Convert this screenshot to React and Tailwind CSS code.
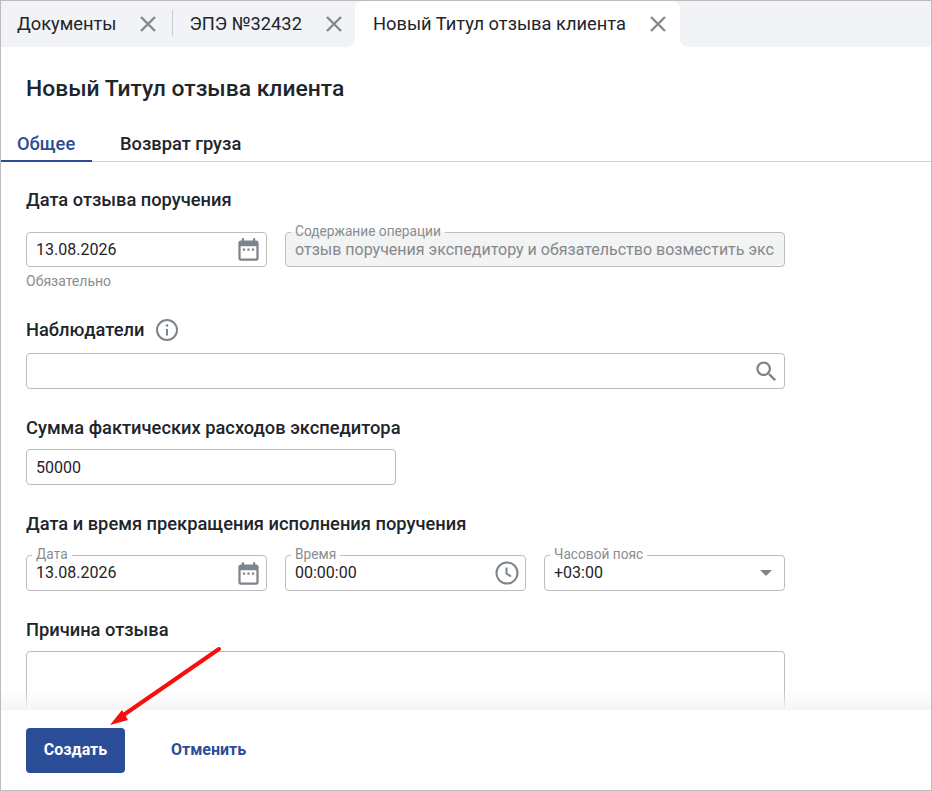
const CloseIcon = () => (
    <svg width="20" height="20" viewBox="0 0 20 20" fill="none" stroke="#85878a" strokeWidth="2.4">
        <path d="M3 3l14 14M17 3L3 17" />
    </svg>
);

const CalendarIcon = () => (
    <svg width="27" height="27" viewBox="0 0 24 24" fill="#7c848c">
        <path d="M9 11H7v2h2v-2zm4 0h-2v2h2v-2zm4 0h-2v2h2v-2zm2-7h-1V2h-2v2H8V2H6v2H5c-1.11 0-1.99.9-1.99 2L3 20c0 1.1.89 2 2 2h14c1.1 0 2-.9 2-2V6c0-1.1-.9-2-2-2zm0 16H5V9h14v11z" />
    </svg>
);

const SearchIcon = () => (
    <svg width="27" height="27" viewBox="0 0 24 24" fill="#7c848c">
        <path d="M15.5 14h-.79l-.28-.27C15.41 12.59 16 11.11 16 9.5 16 5.91 13.09 3 9.5 3S3 5.91 3 9.5 5.91 16 9.5 16c1.61 0 3.09-.59 4.23-1.57l.27.28v.79l5 4.99L20.49 19l-4.99-5zm-6 0C7.01 14 5 11.99 5 9.5S7.01 5 9.5 5 14 7.01 14 9.5 11.99 14 9.5 14z" />
    </svg>
);

const ClockIcon = () => (
    <svg className="mr-[2px]" width="24" height="24" viewBox="0 0 24 24" fill="none" stroke="#7c848c" strokeWidth="2">
        <circle cx="12" cy="12" r="10.5" />
        <path d="M11.5 6.5v6l4.5 3" />
    </svg>
);

const InfoIcon = () => (
    <svg width="24" height="24" viewBox="0 0 24 24" fill="none" stroke="#7c848c" strokeWidth="2">
        <circle cx="12" cy="12" r="10" />
        <path d="M12 11v6.5" />
        <circle cx="12" cy="7.5" r="1.3" fill="#7c848c" stroke="none" />
    </svg>
);

const Field = ({ label, value, icon, disabled, className }) => (
    <div className={`relative ${className || "h-9"}`}>
        {label && (
            <span
                className={`absolute left-[6px] top-[-8px] px-1 text-[13.71px] leading-[15px] text-[#8a8d91] ${
                    disabled ? "bg-[linear-gradient(to_bottom,#ffffff_53%,#f2f3f3_53%)]" : "bg-white"
                }`}
            >
                {label}
            </span>
        )}
        <input
            readOnly
            value={value || ""}
            className={`w-full h-full rounded border border-[#bdbdbd] pl-[9px] pr-9 text-base outline-none ${
                label && !disabled ? "pb-[2px]" : ""
            } ${disabled ? "bg-[#f2f3f3] text-[#85888c] pr-[9px]" : "bg-white text-[#1f2328]"}`}
        />
        {icon && (
            <span className="absolute right-[5px] top-0 h-full flex items-center">{icon}</span>
        )}
    </div>
);

const Label = ({ children, className }) => (
    <h3 className={`text-[18.29px] leading-5 font-medium text-[#20252b] ${className || ""}`}>{children}</h3>
);

const App = () => {
    return (
        <div className="relative w-[932px] h-[791px] flex flex-col overflow-hidden border border-[#bcbcbc] bg-white font-['Roboto',sans-serif] text-[#20252b]">

            {/* ВКЛАДКИ ДОКУМЕНТОВ */}
            <div className="flex h-[46px] shrink-0 bg-white text-[18.29px]">
                <div className="flex items-center w-[354px] bg-[#f1f3f7] rounded-br-lg">
                    <span className="ml-4">Документы</span>
                    <span className="ml-[21px]"><CloseIcon /></span>
                    <span className="ml-[14px] w-px h-[26px] bg-[#c9ccd0] mb-[2px]"></span>
                    <span className="ml-[17px]">ЭПЭ №32432</span>
                    <span className="ml-[22px]"><CloseIcon /></span>
                </div>
                <div className="bg-[linear-gradient(to_bottom,#f1f3f7_50%,#ffffff_50%)]">
                    <div className="flex items-center h-full w-[325px] pl-[18px] rounded-t-lg bg-white">
                        <span>Новый Титул отзыва клиента</span>
                        <span className="ml-[22px]"><CloseIcon /></span>
                    </div>
                </div>
                <div className="flex-1 bg-[#f1f3f7] rounded-bl-lg"></div>
            </div>

            {/* ЗАГОЛОВОК */}
            <h1 className="ml-[25px] mt-[27px] text-[22.86px] leading-[30px] font-medium">Новый Титул отзыва клиента</h1>

            {/* ТАБЫ */}
            <div className="flex mt-[22px] h-[36px] border-b border-[#cfcfcf] shrink-0 text-[18.29px] font-medium">
                <div className="w-[91px] h-[36px] pl-4 pt-[4px] border-b-2 border-[#2b4c96] text-[#2b4c96]">
                    Общее
                </div>
                <div className="ml-7 pt-[4px]">Возврат груза</div>
            </div>

            {/* ФОРМА */}
            <div className="flex-1 overflow-hidden pl-[25px] pt-[28px] w-[784px]">
                <Label>Дата отзыва поручения</Label>
                <div className="grid grid-cols-[241px_1fr] gap-[18px] mt-[22px]">
                    <Field className="h-[35px]" value="13.08.2026" icon={<CalendarIcon />} />
                    <Field
                        className="h-[35px]"
                        disabled
                        label="Содержание операции"
                        value="отзыв поручения экспедитору и обязательство возместить экспедитору расходы"
                    />
                </div>
                <p className="mt-[5px] text-[14px] leading-[18px] text-[#8a8d91]">Обязательно</p>

                <div className="flex items-center gap-[11px] mt-[28px]">
                    <Label>Наблюдатели</Label>
                    <InfoIcon />
                </div>
                <Field className="h-9 mt-[11px]" icon={<SearchIcon />} />

                <Label className="mt-[29px]">Сумма фактических расходов экспедитора</Label>
                <Field className="h-9 mt-[11px] w-[370px]" value="50000" />

                <Label className="mt-[29px]">Дата и время прекращения исполнения поручения</Label>
                <div className="grid grid-cols-3 gap-[18px] mt-[21px]">
                    <Field label="Дата" value="13.08.2026" icon={<CalendarIcon />} />
                    <Field label="Время" value="00:00:00" icon={<ClockIcon />} />
                    <Field
                        label="Часовой пояс"
                        value="+03:00"
                        icon={
                            <svg width="26" height="8" viewBox="0 0 26 8" fill="#7c848c">
                                <path d="M6 1h12l-6 6z" />
                            </svg>
                        }
                    />
                </div>

                <Label className="mt-[29px]">Причина отзыва</Label>
                <div className="mt-[11px] h-[120px] rounded border border-[#bdbdbd]"></div>
            </div>

            {/* ПОДВАЛ */}
            <div className="absolute left-0 right-0 top-[689px] h-[20px] bg-gradient-to-b from-transparent to-[#f4f5f5]"></div>
            <div className="absolute left-0 right-0 bottom-0 h-[80px] bg-white flex items-start pl-[25px] pt-[18px]">
                <button className="w-[99px] h-[45px] pb-[2px] rounded bg-[#2b4c96] text-white text-[16px] font-bold">Создать</button>
                <button className="ml-[46px] h-[45px] pb-[2px] text-[#2b4c96] text-[16px] font-bold">Отменить</button>
            </div>

            {/* СТРЕЛКА */}
            <svg className="absolute left-[-1px] top-[-1px] pointer-events-none" width="932" height="791" fill="none">
                <path d="M219 649L122 716" stroke="#f50f0f" strokeWidth="4" strokeLinecap="round" />
                <path d="M110 725L122 710L128 720Z" fill="#f50f0f" />
            </svg>
        </div>
    );
};

export default App;
